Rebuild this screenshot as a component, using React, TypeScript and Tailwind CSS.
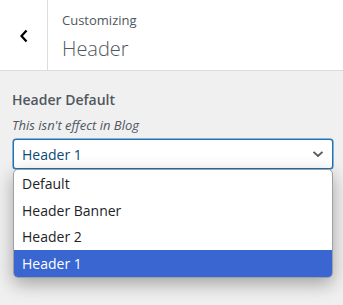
const options = ['Default', 'Header Banner', 'Header 2', 'Header 1'];

const BackChevron = () => (
  <svg width="10" height="14" viewBox="0 0 10 14" fill="none" aria-hidden="true">
    <path d="M7.5 1.5 L2.5 7 L7.5 12.5" stroke="#000" strokeWidth="2.2" strokeLinecap="butt" strokeLinejoin="miter" />
  </svg>
);

const SelectCaret = () => (
  <svg width="12" height="8" viewBox="0 0 12 8" fill="none" aria-hidden="true">
    <path d="M1.5 1.8 L6 6 L10.5 1.8" stroke="#50575e" strokeWidth="1.8" />
  </svg>
);

export default function App() {
  const selected = 'Header 1';

  return (
    <div className="h-[305px] w-[343px] overflow-hidden bg-[#f0f0f1] font-['Open_Sans','Segoe_UI',sans-serif] text-[#50575e]">
      <div className="flex h-[71px] border-b border-[#dcdcde] bg-white">
        <button className="flex w-[48px] items-center justify-center border-r border-[#dcdcde] pl-[1px] pt-[1px]">
          <BackChevron />
        </button>
        <div className="flex flex-col pl-[14px] pt-[10px]">
          <span className="text-[13px] leading-[20px]">Customizing</span>
          <span className="mt-[6px] text-[20px] font-light leading-[26px]">Header</span>
        </div>
      </div>

      <div className="px-[13px] pt-[19px]">
        <div className="-ml-[1px] text-[14px] font-semibold leading-[20px]">Header Default</div>
        <div className="-ml-[1px] mt-[5px] text-[13px] italic leading-[20px]">This isn't effect in Blog</div>

        <div className="relative mt-[4px]">
          <div className="flex h-[30px] w-[320px] items-center justify-between rounded-[3px] border border-[#2271b1] bg-white pl-[8px] pr-[8px] text-[14px] text-[#0a4b78] shadow-[0_0_0_0.5px_#2271b1]">
            <span>{selected}</span>
            <SelectCaret />
          </div>

          <ul className="absolute left-0 top-full w-[320px] overflow-hidden rounded-[5px] border border-[#a0a0a0] bg-white shadow-[0_6px_18px_rgba(0,0,0,0.32)]">
            {options.map((option) => (
              <li
                key={option}
                className={
                  option === selected
                    ? 'flex h-[26.75px] items-center bg-[#3966d0] pl-[8px] text-[14px] text-white'
                    : 'flex h-[26.75px] items-center pl-[8px] text-[14px] text-[#1d2327]'
                }
              >
                {option}
              </li>
            ))}
          </ul>
        </div>
      </div>
    </div>
  );
}
